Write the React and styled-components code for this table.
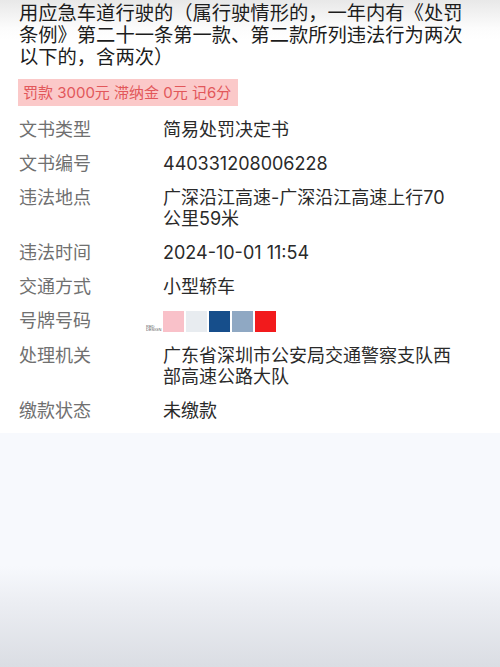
import styled, { createGlobalStyle } from 'styled-components';

const GlobalStyle = createGlobalStyle`
  html, body {
    margin: 0;
    padding: 0;
  }
  body {
    font-family: Inter, "Noto Sans CJK SC", sans-serif;
    background: #fff;
  }
`;

const Page = styled.div`
  width: 500px;
  height: 667px;
  display: flex;
  flex-direction: column;
  overflow: hidden;
`;

const Card = styled.div`
  background: linear-gradient(#e8e8e8 0px, #fcfcfc 28px, #ffffff 40px);
  padding: 2px 19px 12px;
`;

const Reason = styled.p`
  margin: 0;
  font-size: 19.3px;
  line-height: 22px;
  color: #1c1c1c;
  width: 462px;
`;

const Badge = styled.div`
  display: inline-block;
  margin-top: 11px;
  margin-left: -1px;
  padding: 0 7px 0 5px;
  height: 27px;
  line-height: 27px;
  background: #fbc9c9;
  color: #e2575a;
  font-size: 15px;
  white-space: pre;
`;

const List = styled.dl`
  margin: 13px 0 0;
  display: flex;
  flex-direction: column;
  gap: 13px;
`;

const Row = styled.div`
  display: grid;
  grid-template-columns: 144px 292px;
  font-size: 18px;
  line-height: 21px;
`;

const Label = styled.dt`
  margin: 0;
  color: #707070;
`;

const Value = styled.dd`
  margin: 0;
  color: #2a2a2a;
`;

const Swatches = styled.div`
  display: flex;
  align-items: flex-end;
  gap: 2px;
  margin-left: -17px;
  margin-top: 1px;
`;

const Tag = styled.span`
  font-family: "Liberation Sans", sans-serif;
  font-size: 4px;
  line-height: 3px;
  color: #555;
  width: 15px;
  margin-bottom: 1px;
`;

const Swatch = styled.span`
  width: 21px;
  height: 21px;
  background: ${(p) => p.$color};
`;

const Footer = styled.div`
  flex: 1;
  background: linear-gradient(#f7f9fd 0px, #f7f9fd 133px, #eceef3 168px, #dadde3 235px);
`;

const rows = [
  ['文书类型', '简易处罚决定书'],
  ['文书编号', '440331208006228'],
  ['违法地点', '广深沿江高速-广深沿江高速上行70公里59米'],
  ['违法时间', '2024-10-01 11:54'],
  ['交通方式', '小型轿车'],
  ['号牌号码', null],
  ['处理机关', '广东省深圳市公安局交通警察支队西部高速公路大队'],
  ['缴款状态', '未缴款'],
];

const colors = ['#f9c1c9', '#e8ecf0', '#164e8b', '#8fa8c3', '#f21a1c'];

const App = () => (
  <Page>
    <GlobalStyle />
    <Card>
      <Reason>
        用应急车道行驶的（属行驶情形的，一年内有《处罚条例》第二十一条第一款、第二款所列违法行为两次以下的，含两次）
      </Reason>
      <Badge>罚款 3000元 滞纳金 0元 记6分</Badge>
      <List>
        {rows.map(([label, value]) => (
          <Row key={label}>
            <Label>{label}</Label>
            <Value>
              {value === null ? (
                <Swatches>
                  <Tag>RED DESIGN</Tag>
                  {colors.map((c) => (
                    <Swatch key={c} $color={c} />
                  ))}
                </Swatches>
              ) : (
                value
              )}
            </Value>
          </Row>
        ))}
      </List>
    </Card>
    <Footer />
  </Page>
);

export default App;
